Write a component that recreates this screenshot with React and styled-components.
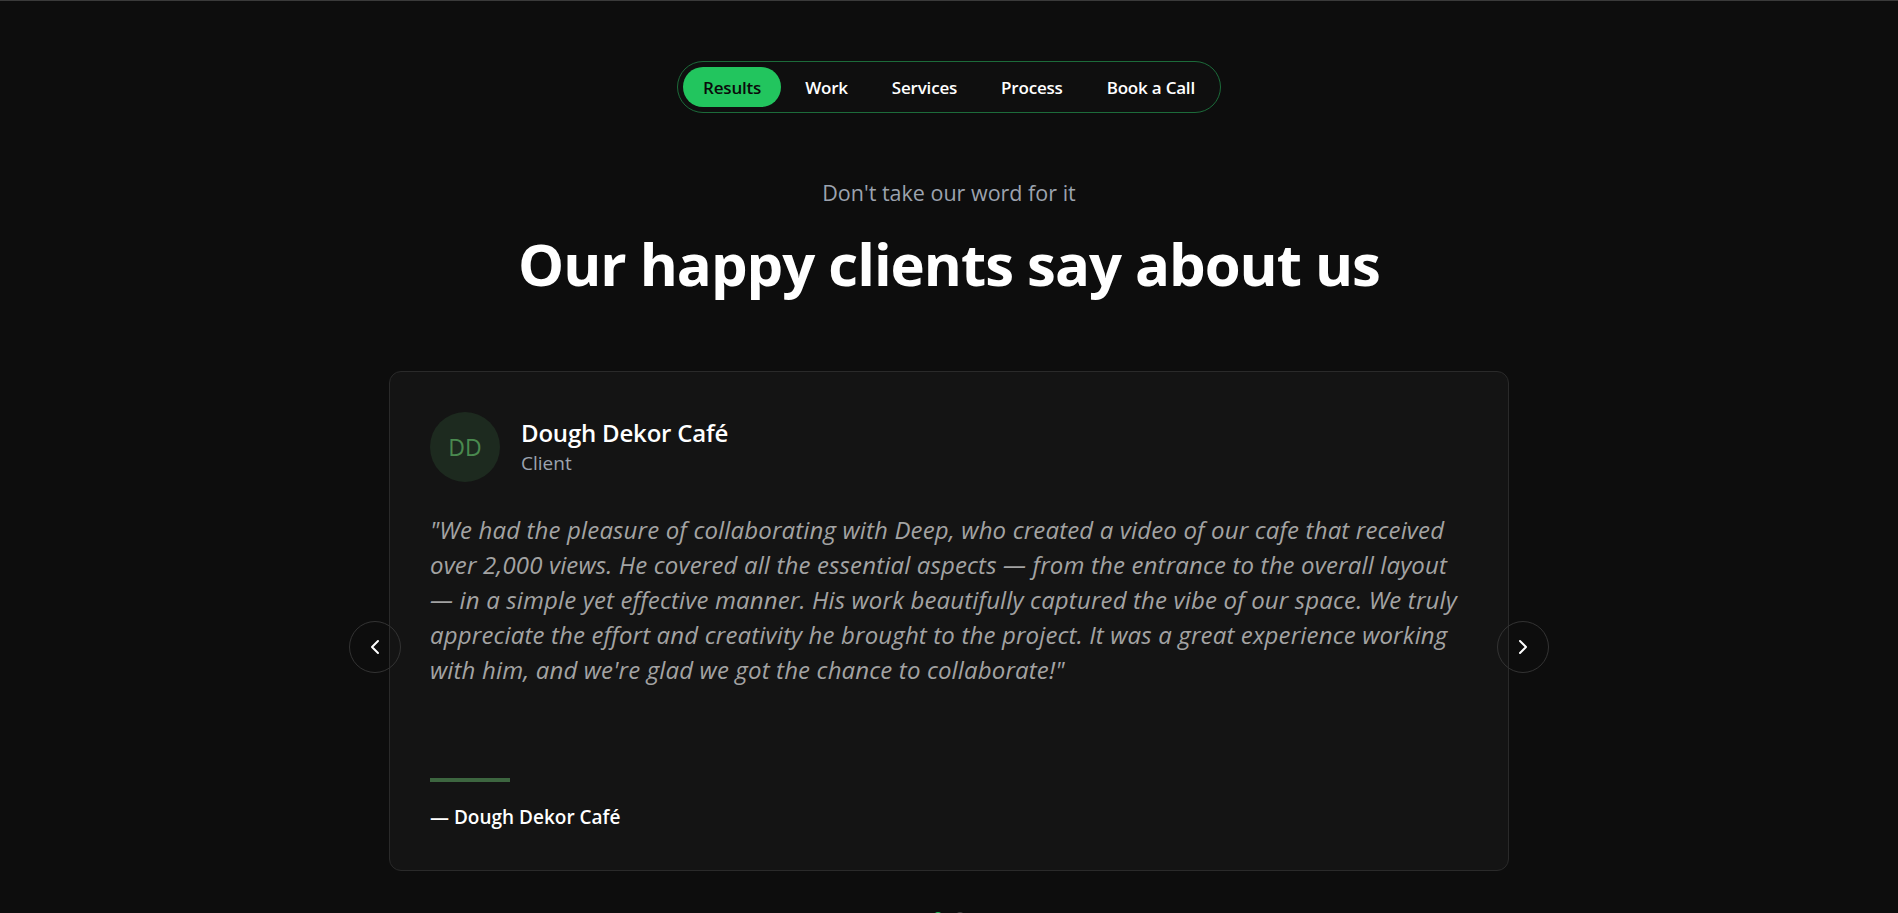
import React from 'react';
import styled, { createGlobalStyle } from 'styled-components';
import { ChevronLeft, ChevronRight } from 'lucide-react';

const GlobalStyle = createGlobalStyle`
  html, body {
    margin: 0;
    padding: 0;
    background: #0d0d0d;
  }
  body {
    font-family: "Open Sans", "Noto Sans", sans-serif;
    color: #fff;
  }
  * { box-sizing: border-box; }
`;

const Page = styled.div`
  height: 913px;
  border-top: 1px solid #3a3a3a;
  display: flex;
  flex-direction: column;
  align-items: center;
  padding-top: 60px;
  overflow: hidden;
`;

const Nav = styled.nav`
  display: flex;
  align-items: center;
  gap: 4px;
  padding: 5px;
  border: 1px solid #1c6b3a;
  border-radius: 999px;
  background: #0f0f0f;
`;

const NavItem = styled.a`
  padding: 0 20px;
  height: 40px;
  display: flex;
  align-items: center;
  border-radius: 999px;
  font-size: 17px;
  font-weight: 600;
  color: ${p => (p.$active ? '#0a0a0a' : '#ffffff')};
  background: ${p => (p.$active ? '#22c55e' : 'transparent')};
  letter-spacing: -0.2px;
  cursor: pointer;
`;

const Eyebrow = styled.p`
  margin: 66px 0 0;
  font-size: 21.5px;
  line-height: 28px;
  color: #9ca3af;
`;

const Heading = styled.h2`
  margin: 22px 0 0;
  font-size: 58px;
  line-height: 70px;
  font-weight: 700;
  letter-spacing: -1px;
`;

const Carousel = styled.div`
  position: relative;
  width: 1120px;
  margin-top: 72px;
`;

const Card = styled.article`
  height: 500px;
  padding: 40px;
  background: #141414;
  border: 1px solid #2a2a2a;
  border-radius: 12px;
  display: flex;
  flex-direction: column;
`;

const Header = styled.div`
  display: flex;
  align-items: center;
  gap: 21px;
`;

const Avatar = styled.div`
  width: 70px;
  height: 70px;
  border-radius: 50%;
  background: #1d2a1f;
  color: #4a8a4f;
  font-size: 23px;
  display: flex;
  align-items: center;
  justify-content: center;
`;

const Who = styled.div`
  display: flex;
  flex-direction: column;
`;

const Name = styled.h3`
  margin: 0;
  font-size: 24px;
  line-height: 32px;
  font-weight: 600;
  letter-spacing: -0.2px;
`;

const Role = styled.span`
  font-size: 19px;
  line-height: 28px;
  color: #9ca3af;
`;

const Quote = styled.blockquote`
  margin: 30px 0 0;
  font-size: 24px;
  line-height: 35px;
  font-style: italic;
  letter-spacing: 0.15px;
  color: #a3a3a3;
`;

const Footer = styled.div`
  margin-top: auto;
  display: flex;
  flex-direction: column;
  gap: 22px;
`;

const Rule = styled.div`
  width: 80px;
  height: 4px;
  background: #3d6640;
`;

const Signature = styled.div`
  font-size: 19px;
  line-height: 26px;
  font-weight: 600;
`;

const Arrow = styled.button`
  position: absolute;
  top: 50%;
  ${p => (p.$side === 'left' ? 'left: -40px;' : 'right: -40px;')}
  transform: translateY(-50%);
  width: 52px;
  height: 52px;
  border-radius: 50%;
  border: 1px solid #333;
  background: transparent;
  color: #fff;
  display: flex;
  align-items: center;
  justify-content: center;
  padding: 0;
  cursor: pointer;
`;

const Dots = styled.div`
  display: flex;
  justify-content: center;
  gap: 12px;
  margin-top: 41px;
`;

const Dot = styled.span`
  width: 10px;
  height: 10px;
  border-radius: 50%;
  background: ${p => (p.$active ? '#22c55e' : '#444')};
`;

const links = ['Results', 'Work', 'Services', 'Process', 'Book a Call'];

const testimonial = {
  initials: 'DD',
  name: 'Dough Dekor Café',
  role: 'Client',
  text: '"We had the pleasure of collaborating with Deep, who created a video of our cafe that received over 2,000 views. He covered all the essential aspects — from the entrance to the overall layout — in a simple yet effective manner. His work beautifully captured the vibe of our space. We truly appreciate the effort and creativity he brought to the project. It was a great experience working with him, and we\'re glad we got the chance to collaborate!"',
};

export default function App() {
  return (
    <>
      <GlobalStyle />
      <Page>
        <Nav>
          {links.map((l, i) => (
            <NavItem key={l} $active={i === 0}>{l}</NavItem>
          ))}
        </Nav>
        <Eyebrow>Don't take our word for it</Eyebrow>
        <Heading>Our happy clients say about us</Heading>
        <Carousel>
          <Card>
            <Header>
              <Avatar>{testimonial.initials}</Avatar>
              <Who>
                <Name>{testimonial.name}</Name>
                <Role>{testimonial.role}</Role>
              </Who>
            </Header>
            <Quote>{testimonial.text}</Quote>
            <Footer>
              <Rule />
              <Signature>— {testimonial.name}</Signature>
            </Footer>
          </Card>
          <Dots>
            <Dot $active />
            <Dot />
          </Dots>
          <Arrow $side="left"><ChevronLeft size={24} strokeWidth={2} /></Arrow>
          <Arrow $side="right"><ChevronRight size={24} strokeWidth={2} /></Arrow>
        </Carousel>
      </Page>
    </>
  );
}
